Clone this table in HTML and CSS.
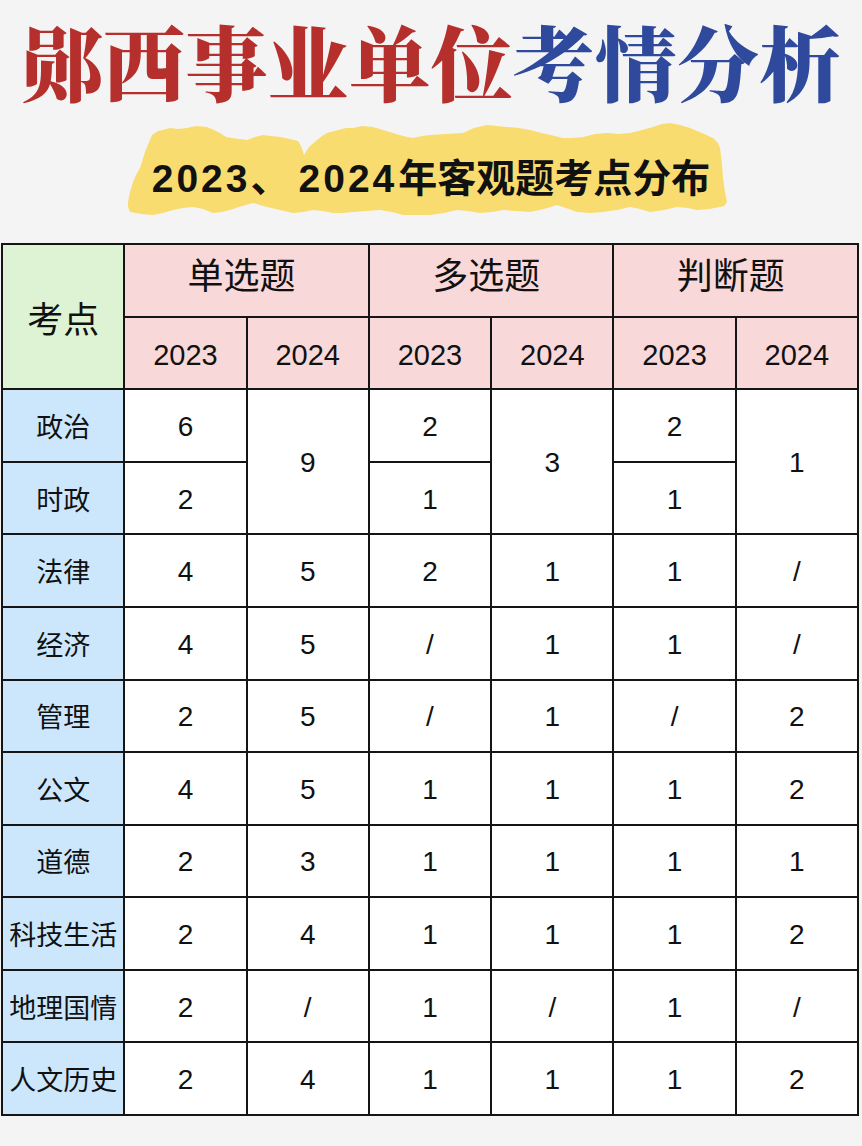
FILE: index.html
```html
<!DOCTYPE html>
<html lang="zh-CN">
<head>
<meta charset="utf-8">
<title>郧西事业单位考情分析</title>
<link rel="stylesheet" href="styles.css">
</head>
<body>
<header class="header">
  <svg class="brush" width="862" height="243" viewBox="0 0 862 243" aria-hidden="true">
    <path fill="#f9dc6f" d="M152,135 L158,131 163,130 170,128 178,129 187,128 196,126 207,127 214,130 220,133 226,137 232,138 240,139 247,140 255,137 263,135 271,136 280,137 290,139 298,141 301,146 304,155 309,147 317,140 322,136 327,133 338,130 346,128 353,128 362,126 373,127 383,130 393,133 403,136 413,138 422,136 430,135 446,134 463,133 474,128 487,125 497,126 507,127 519,128 530,130 546,134 563,138 572,138 583,137 595,134 607,133 619,134 630,133 642,130 653,127 662,124 670,123 680,125 690,128 702,133 713,138 718,143 720,148 721,156 722,165 723,178 725,192 727,202 724,206 720,207 709,209 697,210 688,208 677,207 664,210 650,212 640,209 630,207 617,210 603,212 590,213 577,212 566,208 557,205 544,209 530,212 516,211 503,210 492,212 480,213 468,211 457,210 444,213 430,215 418,215 403,215 392,212 380,210 366,211 353,212 343,213 333,213 323,211 313,210 303,212 293,213 280,210 267,207 260,205 253,203 242,206 230,210 222,212 213,213 203,209 193,207 183,208 173,210 163,213 153,215 141,214 130,212 128,207 128,202 130,192 133,182 136,175 140,168 145,152 Z"/>
  </svg>
  <h1 class="title"><span class="red">郧西事业单位</span><span class="blue">考情分析</span></h1>
  <p class="subtitle"><span class="num">2023</span><span class="sep">、</span><span class="num">2024</span><span class="cjk">年客观题考点分布</span></p>
</header>

<main class="grid">
  <div class="cell key">考点</div>
  <div class="cell kind">单选题</div>
  <div class="cell kind">多选题</div>
  <div class="cell kind">判断题</div>

  <div class="cell yr">2023</div>
  <div class="cell yr">2024</div>
  <div class="cell yr">2023</div>
  <div class="cell yr">2024</div>
  <div class="cell yr">2023</div>
  <div class="cell yr">2024</div>

  <div class="cell name">政治</div>
  <div class="cell v">6</div>
  <div class="cell v tall">9</div>
  <div class="cell v">2</div>
  <div class="cell v tall">3</div>
  <div class="cell v">2</div>
  <div class="cell v tall">1</div>

  <div class="cell name">时政</div>
  <div class="cell v">2</div>
  <div class="cell v">1</div>
  <div class="cell v">1</div>

  <div class="cell name">法律</div>
  <div class="cell v">4</div><div class="cell v">5</div><div class="cell v">2</div><div class="cell v">1</div><div class="cell v">1</div><div class="cell v">/</div>

  <div class="cell name">经济</div>
  <div class="cell v">4</div><div class="cell v">5</div><div class="cell v">/</div><div class="cell v">1</div><div class="cell v">1</div><div class="cell v">/</div>

  <div class="cell name">管理</div>
  <div class="cell v">2</div><div class="cell v">5</div><div class="cell v">/</div><div class="cell v">1</div><div class="cell v">/</div><div class="cell v">2</div>

  <div class="cell name">公文</div>
  <div class="cell v">4</div><div class="cell v">5</div><div class="cell v">1</div><div class="cell v">1</div><div class="cell v">1</div><div class="cell v">2</div>

  <div class="cell name">道德</div>
  <div class="cell v">2</div><div class="cell v">3</div><div class="cell v">1</div><div class="cell v">1</div><div class="cell v">1</div><div class="cell v">1</div>

  <div class="cell name">科技生活</div>
  <div class="cell v">2</div><div class="cell v">4</div><div class="cell v">1</div><div class="cell v">1</div><div class="cell v">1</div><div class="cell v">2</div>

  <div class="cell name">地理国情</div>
  <div class="cell v">2</div><div class="cell v">/</div><div class="cell v">1</div><div class="cell v">/</div><div class="cell v">1</div><div class="cell v">/</div>

  <div class="cell name">人文历史</div>
  <div class="cell v">2</div><div class="cell v">4</div><div class="cell v">1</div><div class="cell v">1</div><div class="cell v">1</div><div class="cell v">2</div>
</main>
</body>
</html>
```

FILE: styles.css
```css
html, body {
  margin: 0;
  padding: 0;
  background: #f4f4f4;
}

body {
  width: 862px;
  min-height: 1146px;
}

.header {
  position: relative;
  height: 243px;
}

.brush {
  position: absolute;
  left: 0;
  top: 0;
}

.title {
  position: relative;
  margin: 0;
  padding-top: 19px;
  text-align: center;
  white-space: nowrap;
  font-family: "Noto Serif CJK SC", "Noto Sans CJK SC", sans-serif;
  font-weight: 900;
  font-size: 82px;
  line-height: 82px;
}

.red { color: #b5302c; }
.blue { color: #2f4a9c; }

.subtitle {
  position: relative;
  margin: 58px 0 0;
  text-align: center;
  white-space: nowrap;
  font-family: "Liberation Sans", "Noto Sans CJK SC", sans-serif;
  font-weight: 700;
  font-size: 39px;
  line-height: 39px;
  color: #111;
}

.num { letter-spacing: 3px; }
.sep { margin-right: 9px; }
.cjk { margin-left: 1px; }

.grid {
  margin-left: 1px;
  width: 858px;
  height: 873px;
  box-sizing: border-box;
  padding: 2px;
  gap: 2px;
  display: grid;
  grid-template-columns: repeat(7, 1fr);
  grid-template-rows: repeat(12, 1fr);
  background: #151515;
}

.cell {
  display: flex;
  align-items: center;
  justify-content: center;
  background: #fff;
  color: #111;
  line-height: 1;
  box-sizing: border-box;
  white-space: nowrap;
}

.key {
  grid-row: span 2;
  background: #def3d3;
  font-family: "Noto Sans CJK SC", sans-serif;
  font-size: 36px;
}

.kind {
  grid-column: span 2;
  background: #f8d8d9;
  font-family: "Noto Sans CJK SC", sans-serif;
  font-size: 36px;
  padding-bottom: 14px;
  padding-right: 10px;
}

.yr {
  background: #f8d8d9;
  font-family: "Liberation Sans", sans-serif;
  font-size: 29px;
  padding-top: 6px;
}

.name {
  background: #cce7fb;
  font-family: "Noto Sans CJK SC", sans-serif;
  font-size: 27px;
}

.v {
  font-family: "Liberation Sans", sans-serif;
  font-size: 28px;
  padding-top: 3px;
}

.tall { grid-row: span 2; }
```
